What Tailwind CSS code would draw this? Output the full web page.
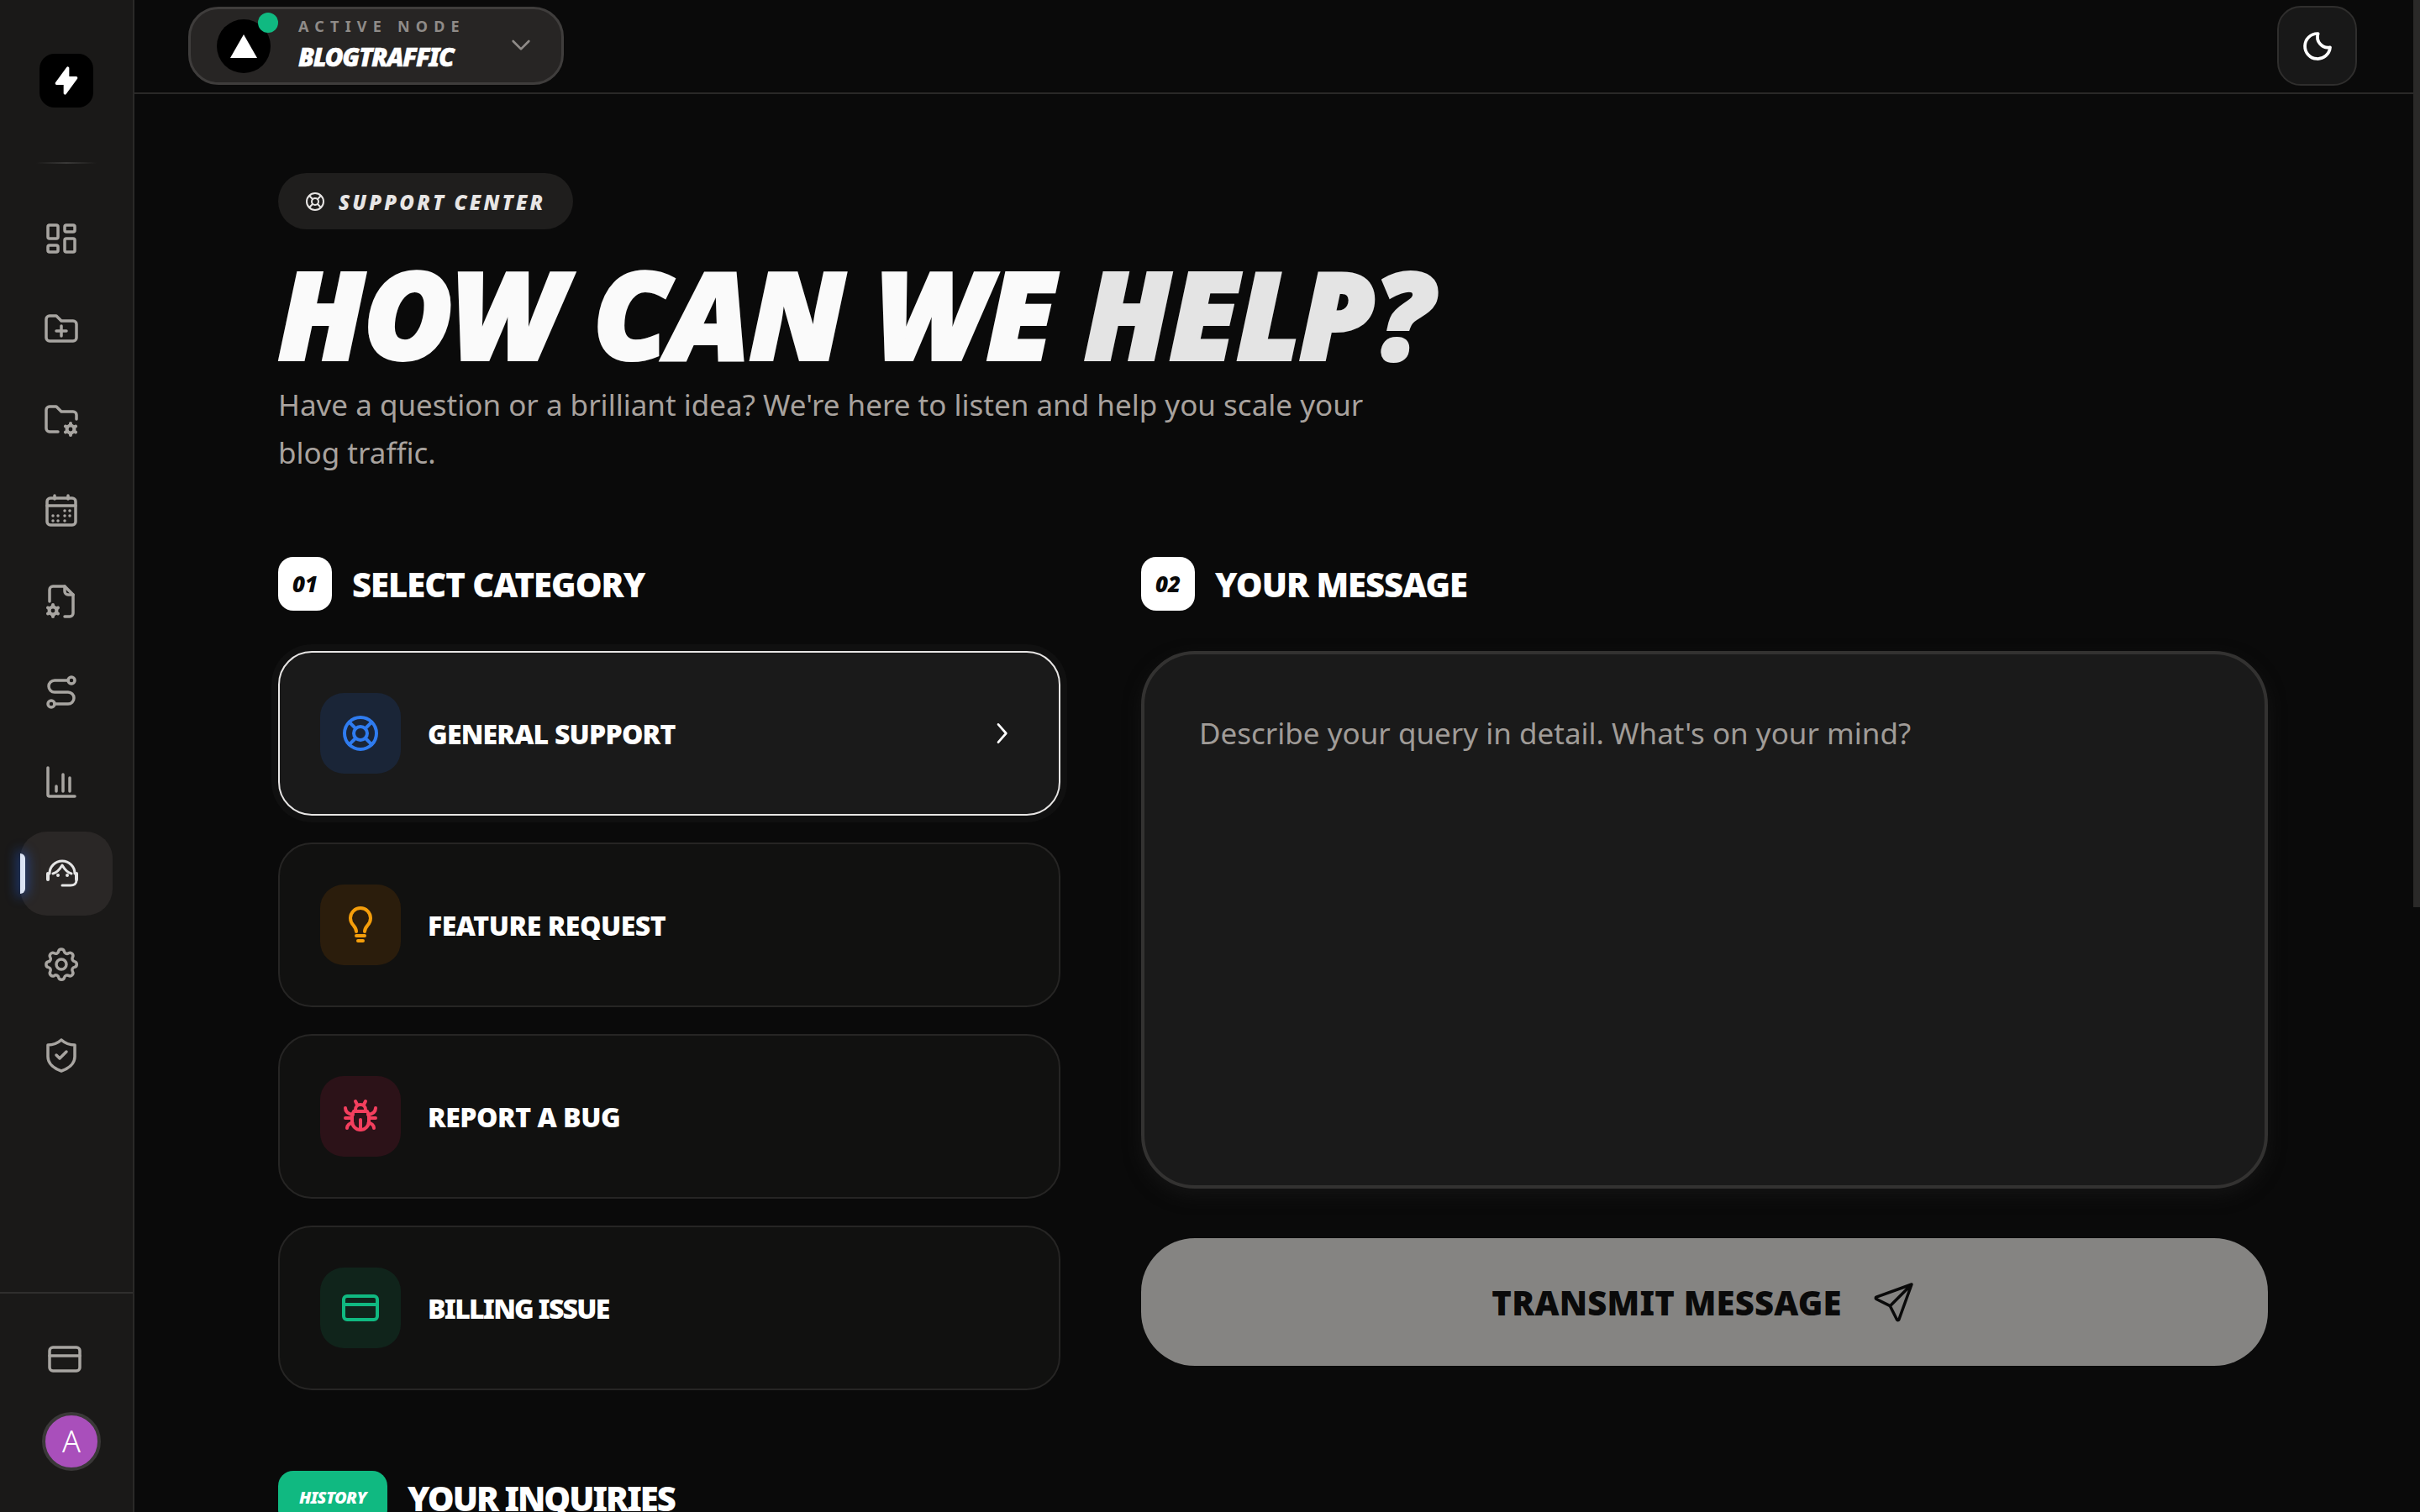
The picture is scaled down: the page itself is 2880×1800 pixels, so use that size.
<!DOCTYPE html>
<html lang="en">
<head>
    <meta charset="UTF-8">
    <title>Support Center</title>
    <script src="https://cdn.jsdelivr.net/npm/@tailwindcss/browser@4"></script>
</head>
<body class="h-[1800px] w-[2880px] overflow-hidden bg-[#0a0a0a] font-['Noto_Sans',sans-serif] text-white">
<div class="flex h-full">

    <!-- Sidebar -->
    <aside class="flex w-[160px] shrink-0 flex-col border-r-2 border-[#2a2928] bg-[#1a1918]">
        <div class="flex h-[193px] shrink-0 flex-col items-center">
            <div class="mt-[64px] flex h-[64px] w-[64px] items-center justify-center rounded-[18px] bg-black">
                <svg class="h-[40px] w-[40px]" viewBox="0 0 24 24" fill="#fff" stroke="#fff" stroke-width="2" stroke-linejoin="round"><path d="M13 3v7h6l-8 11v-7H5z"/></svg>
            </div>
        </div>
        <div class="mx-auto h-[2px] w-[72px] bg-gradient-to-r from-transparent via-[#3a3938] to-transparent"></div>

        <nav class="mt-[39px] flex flex-col gap-2 px-6 text-[#a8a5a1]">
            <a class="flex h-[100px] w-[110px] items-center justify-center pr-[12px]">
                <svg class="h-[48px] w-[48px]" viewBox="0 0 24 24" fill="none" stroke="currentColor" stroke-width="1.75" stroke-linecap="round" stroke-linejoin="round"><rect x="4" y="4" width="6" height="8" rx="1"/><rect x="4" y="16" width="6" height="4" rx="1"/><rect x="14" y="12" width="6" height="8" rx="1"/><rect x="14" y="4" width="6" height="4" rx="1"/></svg>
            </a>
            <a class="flex h-[100px] w-[110px] items-center justify-center pr-[12px]">
                <svg class="h-[48px] w-[48px]" viewBox="0 0 24 24" fill="none" stroke="currentColor" stroke-width="1.75" stroke-linecap="round" stroke-linejoin="round"><path d="M5 4h4l3 3h7a2 2 0 0 1 2 2v8a2 2 0 0 1-2 2H5a2 2 0 0 1-2-2V6a2 2 0 0 1 2-2"/><path d="M12 10v6M9 13h6"/></svg>
            </a>
            <a class="flex h-[100px] w-[110px] items-center justify-center pr-[12px]">
                <svg class="h-[48px] w-[48px]" viewBox="0 0 24 24" fill="none" stroke="currentColor" stroke-width="1.75" stroke-linecap="round" stroke-linejoin="round"><path d="M10 19H5a2 2 0 0 1-2-2V6a2 2 0 0 1 2-2h4l3 3h7a2 2 0 0 1 2 2v2.500"/><circle cx="17.500" cy="17.500" r="2.200" stroke-width="2"/><path stroke-width="2" d="M17.500 14v1M17.500 20v1M20.500 15.750l-.9.500M15.400 18.750l-.9.500M14.500 15.750l.9.500M19.600 18.750l.9.500"/></svg>
            </a>
            <a class="flex h-[100px] w-[110px] items-center justify-center pr-[12px]">
                <svg class="h-[48px] w-[48px]" viewBox="0 0 24 24" fill="none" stroke="currentColor" stroke-width="1.75" stroke-linecap="round" stroke-linejoin="round"><rect x="3.500" y="4.500" width="17" height="16" rx="2"/><path d="M3.500 9h17M8 3v2M16 3v2"/><path d="M14 12h.01M17 12h.01M7 15h.01M10 15h.01M14 15h.01M17 15h.01M7 18h.01M10 18h.01M14 18h.01"/></svg>
            </a>
            <a class="flex h-[100px] w-[110px] items-center justify-center pr-[12px]">
                <svg class="h-[48px] w-[48px]" viewBox="0 0 24 24" fill="none" stroke="currentColor" stroke-width="1.75" stroke-linecap="round" stroke-linejoin="round"><path d="M5 12V5a2 2 0 0 1 2-2h7l5 5v11a2 2 0 0 1-2 2h-3"/><path d="M14 3v3a2 2 0 0 0 2 2h3"/><circle cx="7" cy="17.500" r="2.200" stroke-width="2"/><path stroke-width="2" d="M7 14v1M7 20v1M10 15.750l-.9.500M4.900 18.750l-.9.500M4 15.750l.9.500M9.100 18.750l.9.500"/></svg>
            </a>
            <a class="flex h-[100px] w-[110px] items-center justify-center pr-[12px]">
                <svg class="h-[48px] w-[48px]" viewBox="0 0 24 24" fill="none" stroke="currentColor" stroke-width="1.75" stroke-linecap="round" stroke-linejoin="round"><circle cx="6" cy="19" r="2"/><circle cx="18" cy="5" r="2"/><path d="M16 5H8a3.500 3.500 0 0 0 0 7h8a3.500 3.500 0 0 1 0 7H8"/></svg>
            </a>
            <a class="flex h-[100px] w-[110px] items-center justify-center pr-[12px]">
                <svg class="h-[48px] w-[48px]" viewBox="0 0 24 24" fill="none" stroke="currentColor" stroke-width="1.75" stroke-linecap="round" stroke-linejoin="round"><path d="M4 3v16a1 1 0 0 0 1 1h15"/><path d="M9 17v-3M13 17V7M17 17v-8"/></svg>
            </a>
            <a class="relative flex h-[100px] w-[110px] items-center justify-center rounded-[32px] bg-[#2a2726] pr-[12px] text-[#e5e5e5]">
                <span class="absolute top-[26px] left-0 h-[48px] w-[6px] rounded-r-full bg-[#dbe4f5] shadow-[0_0_14px_4px_rgba(37,99,235,0.4)]"></span>
                <svg class="h-[48px] w-[48px]" viewBox="0 0 48 48" fill="none" stroke="currentColor" stroke-width="3" stroke-linecap="round" stroke-linejoin="round"><path d="M10 24a15 15 0 0 1 30 0"/><path stroke-width="4" d="M8 24v7M42 24v7"/><path d="M42 32c0 4-3 6-7 6H25"/><path d="M14 24c5-1 8-5 11-10 3 5 6 9 11 10"/><path stroke-width="4" d="M20 26h.01M31 26h.01"/></svg>
            </a>
            <a class="flex h-[100px] w-[110px] items-center justify-center pr-[12px]">
                <svg class="h-[48px] w-[48px]" viewBox="0 0 24 24" fill="none" stroke="currentColor" stroke-width="1.75" stroke-linecap="round" stroke-linejoin="round"><path d="M10.300 4.300c.4-1.800 3-1.800 3.400 0a1.700 1.700 0 0 0 2.600 1.100c1.500-.9 3.300.8 2.400 2.400a1.700 1.700 0 0 0 1.100 2.500c1.800.4 1.800 3 0 3.400a1.700 1.700 0 0 0-1.100 2.600c.9 1.500-.8 3.300-2.400 2.400a1.700 1.700 0 0 0-2.500 1.100c-.4 1.800-3 1.800-3.400 0a1.700 1.700 0 0 0-2.600-1.100c-1.500.9-3.300-.8-2.400-2.400a1.700 1.700 0 0 0-1.100-2.500c-1.800-.4-1.800-3 0-3.400a1.700 1.700 0 0 0 1.100-2.600c-.9-1.500.8-3.300 2.400-2.400 1 .6 2.300.1 2.500-1.100"/><circle cx="12" cy="12" r="3"/></svg>
            </a>
            <a class="flex h-[100px] w-[110px] items-center justify-center pr-[12px]">
                <svg class="h-[48px] w-[48px]" viewBox="0 0 24 24" fill="none" stroke="currentColor" stroke-width="1.75" stroke-linecap="round" stroke-linejoin="round"><path d="M12 3a12 12 0 0 0 8 3 1 1 0 0 1 0 0v7c0 4-3.500 7-8 8.500C7.500 20 4 17 4 13V6a12 12 0 0 0 8-3"/><path d="M9 12l2 2 4-4"/></svg>
            </a>
        </nav>

        <div class="mt-auto flex h-[262px] shrink-0 flex-col items-center border-t-2 border-[#2f2e2d] pl-[12px]">
            <svg class="mt-[54px] mr-[16px] h-[48px] w-[48px] text-[#a8a5a1]" viewBox="0 0 24 24" fill="none" stroke="currentColor" stroke-width="1.75" stroke-linecap="round" stroke-linejoin="round"><rect x="3" y="5" width="18" height="14" rx="2"/><path d="M3 10h18"/></svg>
            <div class="mt-[39px] flex h-[70px] w-[70px] items-center justify-center rounded-full border-4 border-[#3a3838] bg-[#a94fbb] text-[36px] leading-none font-light text-white">A</div>
        </div>
    </aside>

    <!-- Main -->
    <div class="flex min-w-0 flex-1 flex-col">
        <header class="flex h-[112px] shrink-0 items-start justify-between border-b-2 border-[#2a2928] pr-[75px] pl-[64px]">
            <div class="mt-[8px] flex h-[93px] w-[447px] items-center rounded-[36px] border-[3px] border-[#3f3d3c] bg-[#272524] pr-[32px] pl-[31px]">
                <div class="relative flex h-[64px] w-[64px] shrink-0 items-center justify-center rounded-full bg-black">
                    <svg class="h-[28px] w-[32px]" viewBox="0 0 32 28" fill="#fff"><path d="M16 0l16 28H0z"/></svg>
                    <span class="absolute -top-[8px] -right-[9px] h-[24px] w-[24px] rounded-full bg-[#10b981]"></span>
                </div>
                <div class="ml-[33px] flex flex-col">
                    <span class="-mt-[4px] text-[18px] leading-[24px] font-bold tracking-[0.4em] text-[#8f8b88]">ACTIVE NODE</span>
                    <span class="mt-[7px] text-[30px] leading-[36px] font-black tracking-[-0.045em] text-white italic [-webkit-text-stroke:0.5px]">BLOGTRAFFIC</span>
                </div>
                <svg class="mt-[-4px] ml-auto h-[32px] w-[32px] text-[#8f8b88]" viewBox="0 0 24 24" fill="none" stroke="currentColor" stroke-width="2" stroke-linecap="round" stroke-linejoin="round"><path d="M5 9l7 7 7-7"/></svg>
            </div>
            <button class="mt-[7px] flex h-[95px] w-[95px] items-center justify-center rounded-[28px] border-2 border-[#2f2e2d] bg-[#181818]">
                <svg class="h-[40px] w-[40px]" viewBox="0 0 24 24" fill="none" stroke="#fff" stroke-width="2.250" stroke-linecap="round" stroke-linejoin="round"><path d="M12 3c.1 0 .3 0 .4 0a7.500 7.500 0 0 0 8.600 9.800A9 9 0 1 1 12 3z"/></svg>
            </button>
        </header>

        <main class="pl-[171px]">
            <div class="mt-[94px] flex h-[67px] w-[351px] items-center rounded-full bg-[#1f1e1d] pl-[32px]">
                <svg class="h-[24px] w-[24px] text-[#e7e5e4]" viewBox="0 0 24 24" fill="none" stroke="currentColor" stroke-width="2" stroke-linecap="round"><circle cx="12" cy="12" r="4"/><circle cx="12" cy="12" r="10"/><path d="M15 15l3.700 3.700M9 15l-3.700 3.700M5.300 5.300L9 9M18.700 5.300L15 9"/></svg>
                <span class="ml-[16px] pt-[2px] text-[24px] font-black tracking-[0.13em] text-[#e7e5e4] italic">SUPPORT CENTER</span>
            </div>
            <h1 class="mt-[27px] text-[144px] leading-[144px] font-black tracking-[-0.008em] whitespace-nowrap text-[#fafafa] italic [-webkit-text-stroke:4px]">HOW CAN WE <span class="text-[#e4e4e4]">HELP?</span></h1>
            <p class="mt-[9px] w-[1344px] text-[35px] leading-[57px] text-[#a8a29e]">Have a question or a brilliant idea? We're here to listen and help you scale your blog traffic.</p>

            <div class="mt-[96px] grid grid-cols-[931px_1341px] gap-[96px]">
                <section>
                    <div class="flex items-center gap-6">
                        <span class="flex h-[64px] w-[64px] items-center justify-center rounded-[18px] bg-white text-[26px] font-black text-[#0a0a0a] italic">01</span>
                        <h2 class="pt-[2px] text-[40px] font-black tracking-[-0.025em]">SELECT CATEGORY</h2>
                    </div>
                    <div class="mt-[48px] flex flex-col gap-8">
                        <button class="flex h-[196px] items-center rounded-[40px] border-2 border-[#e7e5e4] bg-[#1a1a1a] px-[48px] shadow-[0_0_0_8px_#101010]">
                            <span class="flex h-[96px] w-[96px] shrink-0 items-center justify-center rounded-[28px] bg-[#1a2537]">
                                <svg class="h-[48px] w-[48px] text-[#2f7cf0]" viewBox="0 0 24 24" fill="none" stroke="currentColor" stroke-width="2" stroke-linecap="round"><circle cx="12" cy="12" r="4"/><circle cx="12" cy="12" r="9.500"/><path d="M15 15l3.700 3.700M9 15l-3.700 3.700M5.300 5.300L9 9M18.700 5.300L15 9"/></svg>
                            </span>
                            <span class="ml-[32px] pt-[2px] text-[32px] font-black tracking-[-0.025em] text-white">GENERAL SUPPORT</span>
                            <svg class="mr-[4px] ml-auto h-[32px] w-[32px] text-white" viewBox="0 0 24 24" fill="none" stroke="currentColor" stroke-width="2" stroke-linecap="round" stroke-linejoin="round"><path d="M9 4l7 8-7 8"/></svg>
                        </button>
                        <button class="flex h-[196px] items-center rounded-[40px] border-2 border-[#262524] bg-[#111110] px-[48px]">
                            <span class="flex h-[96px] w-[96px] shrink-0 items-center justify-center rounded-[28px] bg-[#2b1d0c]">
                                <svg class="h-[48px] w-[48px] text-[#f59e0b]" viewBox="0 0 24 24" fill="none" stroke="currentColor" stroke-width="2" stroke-linecap="round" stroke-linejoin="round"><path d="M9.500 16c0-1.500-.700-2.500-1.700-3.700A6 6 0 1 1 16.200 12.300c-1 1.200-1.700 2.200-1.700 3.700"/><path d="M9.500 18.500h5M10.500 21.500h3"/></svg>
                            </span>
                            <span class="ml-[32px] pt-[2px] text-[32px] font-black tracking-[-0.015em] text-white">FEATURE REQUEST</span>
                        </button>
                        <button class="flex h-[196px] items-center rounded-[40px] border-2 border-[#262524] bg-[#111110] px-[48px]">
                            <span class="flex h-[96px] w-[96px] shrink-0 items-center justify-center rounded-[28px] bg-[#2c1218]">
                                <svg class="h-[48px] w-[48px] text-[#f43f5e]" viewBox="0 0 24 24" fill="none" stroke="currentColor" stroke-width="2" stroke-linecap="round" stroke-linejoin="round"><path d="M9 9V8a3 3 0 0 1 6 0v1"/><path d="M8 9h8a6 6 0 0 1 1 3v3a5 5 0 0 1-10 0v-3a6 6 0 0 1 1-3"/><path d="M3 13h4M17 13h4M12 20v-6M4 19c0-1.700 1.500-3 3.200-3M20 19c0-1.700-1.500-3-3.200-3M3 7c0 2 1.500 3.500 4.500 4M21 7c0 2-1.500 3.500-4.500 4M9 3l1 2M15 3l-1 2"/></svg>
                            </span>
                            <span class="ml-[32px] pt-[2px] text-[32px] font-black tracking-[-0.015em] text-white">REPORT A BUG</span>
                        </button>
                        <button class="flex h-[196px] items-center rounded-[40px] border-2 border-[#262524] bg-[#111110] px-[48px]">
                            <span class="flex h-[96px] w-[96px] shrink-0 items-center justify-center rounded-[28px] bg-[#10241b]">
                                <svg class="h-[48px] w-[48px] text-[#10b981]" viewBox="0 0 24 24" fill="none" stroke="currentColor" stroke-width="2" stroke-linecap="round" stroke-linejoin="round"><rect x="2" y="5" width="20" height="14" rx="2"/><path d="M2 10h20"/></svg>
                            </span>
                            <span class="ml-[32px] pt-[2px] text-[32px] font-black tracking-[-0.055em] text-white">BILLING ISSUE</span>
                        </button>
                    </div>
                </section>

                <section>
                    <div class="flex items-center gap-6">
                        <span class="flex h-[64px] w-[64px] items-center justify-center rounded-[18px] bg-white text-[26px] font-black text-[#0a0a0a] italic">02</span>
                        <h2 class="pt-[2px] text-[40px] font-black tracking-[-0.025em]">YOUR MESSAGE</h2>
                    </div>
                    <div class="mt-[48px] h-[640px] rounded-[64px] border-4 border-[#333231] bg-[#1a1a1a] px-[65px] pt-[70px] text-[35px] leading-[48px] text-[#a09c98] shadow-[0_8px_20px_#141414]">Describe your query in detail. What's on your mind?</div>
                    <button class="mt-[59px] flex h-[152px] w-full items-center justify-center rounded-[64px] bg-[#858482] pt-[2px] text-[40px] font-black tracking-[0.005em] text-[#0a0a0a]">
                        TRANSMIT MESSAGE
                        <svg class="-mt-[2px] ml-[34px] h-[56px] w-[56px]" viewBox="0 0 24 24" fill="none" stroke="currentColor" stroke-width="1.500" stroke-linecap="round" stroke-linejoin="round"><path d="M10 14L21 3M21 3l-6.500 18a.55.55 0 0 1-1 0L10 14l-7-3.500a.55.55 0 0 1 0-1z"/></svg>
                    </button>
                </section>
            </div>

            <div class="mt-[96px] flex items-center gap-6">
                <span class="flex h-[64px] w-[130px] items-center justify-center rounded-[18px] bg-[#10b981] text-[20px] font-black tracking-[-0.03em] text-white italic">HISTORY</span>
                <h2 class="pt-[2px] text-[40px] font-black tracking-[-0.05em]">YOUR INQUIRIES</h2>
            </div>
        </main>
    </div>

    <!-- Scrollbar -->
    <div class="absolute top-0 right-0 h-[1080px] w-[8px] bg-[#2a2928]"></div>
</div>
</body>
</html>
